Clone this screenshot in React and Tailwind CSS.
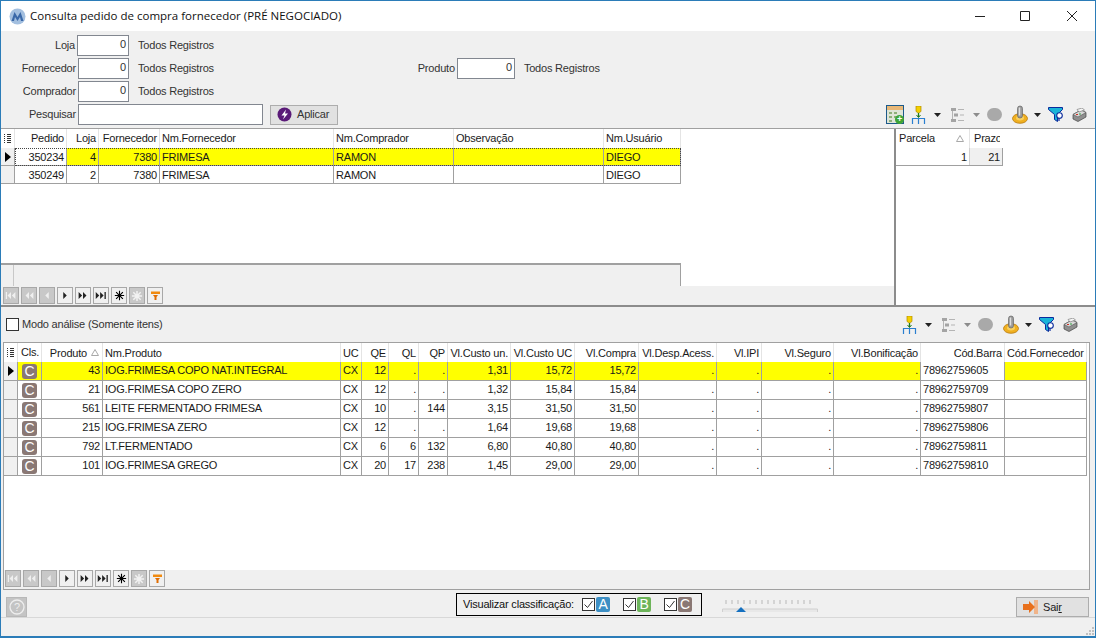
const topCols = [
  { t: "Pedido", w: 52, a: "text-right" },
  { t: "Loja", w: 32, a: "text-right" },
  { t: "Fornecedor", w: 61, a: "text-right" },
  { t: "Nm.Fornecedor", w: 174, a: "text-left" },
  { t: "Nm.Comprador", w: 120, a: "text-left" },
  { t: "Observação", w: 150, a: "text-left" },
  { t: "Nm.Usuário", w: 77, a: "text-left" },
];
const topRows = [
  ["350234", "4", "7380", "FRIMESA", "RAMON", "", "DIEGO"],
  ["350249", "2", "7380", "FRIMESA", "RAMON", "", "DIEGO"],
];
// a = alinhamento dos dados, h = alinhamento do titulo quando difere
const prodCols = [
  { t: "Produto", w: 61, a: "text-right", sort: true },
  { t: "Nm.Produto", w: 238, a: "text-left" },
  { t: "UC", w: 21, a: "text-left" },
  { t: "QE", w: 27, a: "text-right" },
  { t: "QL", w: 30, a: "text-right" },
  { t: "QP", w: 29, a: "text-right" },
  { t: "Vl.Custo un.", w: 63, a: "text-right" },
  { t: "Vl.Custo UC", w: 64, a: "text-right" },
  { t: "Vl.Compra", w: 64, a: "text-right" },
  { t: "Vl.Desp.Acess.", w: 78, a: "text-right" },
  { t: "Vl.IPI", w: 45, a: "text-right" },
  { t: "Vl.Seguro", w: 72, a: "text-right" },
  { t: "Vl.Bonificação", w: 87, a: "text-right" },
  { t: "Cód.Barra", w: 84, a: "text-left", h: "justify-end" },
  { t: "Cód.Fornecedor", w: 82, a: "text-left" },
];
const prodRows = [
  ["43", "IOG.FRIMESA COPO NAT.INTEGRAL", "CX", "12", ".", ".", "1,31", "15,72", "15,72", ".", ".", ".", ".", "78962759605", ""],
  ["21", "IOG.FRIMESA COPO ZERO", "CX", "12", ".", ".", "1,32", "15,84", "15,84", ".", ".", ".", ".", "78962759709", ""],
  ["561", "LEITE FERMENTADO FRIMESA", "CX", "10", ".", "144", "3,15", "31,50", "31,50", ".", ".", ".", ".", "78962759807", ""],
  ["215", "IOG.FRIMESA ZERO", "CX", "12", ".", ".", "1,64", "19,68", "19,68", ".", ".", ".", ".", "78962759806", ""],
  ["792", "LT.FERMENTADO", "CX", "6", "6", "132", "6,80", "40,80", "40,80", ".", ".", ".", ".", "78962759811", ""],
  ["101", "IOG.FRIMESA GREGO", "CX", "20", "17", "238", "1,45", "29,00", "29,00", ".", ".", ".", ".", "78962759810", ""],
];

function ColumnsIcon() {
  return (
    <svg width="7" height="9" viewBox="0 0 7 9" className="shrink-0">
      <path d="M0 .5h1M3 .5h4M0 2.5h1M3 2.5h4M0 4.5h1M3 4.5h4M0 6.5h1M3 6.5h4M0 8.5h1M3 8.5h4" stroke="#333" />
    </svg>
  );
}

function SortTriangle() {
  return (
    <svg width="8" height="7" viewBox="0 0 8 7" className="shrink-0">
      <path d="M4 .5 7.5 6.5H.5Z" fill="none" stroke="#a8a8a8" />
    </svg>
  );
}

function RowArrow() {
  return (
    <svg width="6" height="10" viewBox="0 0 6 10">
      <path d="M0 0 6 5 0 10Z" fill="#000" />
    </svg>
  );
}

function Pager() {
  const glyphs = [
    { d: "M2 4h1.500v8H2ZM8 4v8L4 8ZM13 4v8L9 8Z", off: true },
    { d: "M8 4v8L4 8ZM13 4v8L9 8Z", off: true },
    { d: "M10 4v8L6 8Z", off: true },
    { d: "M6 4v8l4-4Z" },
    { d: "M3 4v8l4-4ZM8 4v8l4-4Z" },
    { d: "M2 4v8l4-4ZM7 4v8l4-4ZM12 4h1.500v8H12Z" },
  ];
  return (
    <div className="flex gap-[2px]">
      {glyphs.map((g, i) => (
        <div key={i} className={`w-[16px] h-[17px] border border-[#a8a8a8] flex items-center justify-center ${g.off ? "bg-[#c8c8c8]" : "bg-[#f0f0f0]"}`}>
          <svg width="15" height="15" viewBox="0 0 16 16">
            <path d={g.d} fill={g.off ? "#efefef" : "#222"} />
          </svg>
        </div>
      ))}
      <div className="w-[16px] h-[17px] border border-[#a8a8a8] bg-[#f0f0f0] flex items-center justify-center">
        <svg width="11" height="11" viewBox="0 0 13 13">
          <path d="M6.500 1v11M1 6.500h11M2.500 2.500l8 8M10.500 2.500l-8 8" stroke="#000" strokeWidth="1.300" />
        </svg>
      </div>
      <div className="w-[16px] h-[17px] border border-[#a8a8a8] bg-[#c8c8c8] flex items-center justify-center">
        <svg width="12" height="12" viewBox="0 0 13 13">
          <path d="M6.500 1v11M1 6.500h11M2.500 2.500l8 8M10.500 2.500l-8 8" stroke="#f2f2f2" strokeWidth="1.600" />
        </svg>
      </div>
      <div className="w-[16px] h-[17px] border border-[#a8a8a8] bg-[#f0f0f0] flex items-center justify-center">
        <svg width="11" height="11" viewBox="0 0 11 11">
          <path d="M1 1.500h9v2.500H1Z" fill="#f08a10" />
          <path d="M3 5h5L6.500 7v3h-2V7Z" fill="#e06c00" />
        </svg>
      </div>
    </div>
  );
}

function Caret({ muted, className }) {
  return (
    <svg width="7" height="4" viewBox="0 0 7 4" className={`shrink-0 ${className}`}>
      <path d="M0 0h7L3.500 4Z" fill={muted ? "#8c8c8c" : "#222"} />
    </svg>
  );
}

function ForkIcon({ className }) {
  return (
    <svg width="16" height="18" viewBox="0 0 16 18" className={`shrink-0 ${className}`}>
      <path d="M5 0h5v5.500L7.500 7 5 5.500Z" fill="#f4d000" stroke="#b08a00" strokeWidth=".7" />
      <path d="M7.500 7v4" stroke="#1e7a1e" strokeWidth="1.300" />
      <path d="M5.500 9 7.500 11.500 9.500 9" fill="none" stroke="#1e7a1e" />
      <path d="M1.500 18v-5.500h12V18M7.500 12.500V18" fill="none" stroke="#2a7fd0" strokeWidth="1.200" />
    </svg>
  );
}

function ListIcon({ className }) {
  return (
    <svg width="13" height="14" viewBox="0 0 13 14" className={`shrink-0 ${className}`}>
      <path d="M0 0h5v3H0ZM3 5.500h4v3H3ZM0 11h5v3H0Z" fill="#a4a4a4" />
      <path d="M7 1.500h6M9 7h4M7 12.500h6M1.500 3v8" stroke="#b4b4b4" />
    </svg>
  );
}

function BlobIcon({ className }) {
  return <div className={`w-[15px] h-[13px] shrink-0 rounded-full bg-[#a9a9a9] ${className}`} />;
}

function JoystickIcon({ className }) {
  return (
    <svg width="16" height="19" viewBox="0 0 16 19" className={`shrink-0 ${className}`}>
      <ellipse cx="8" cy="13.500" rx="7.500" ry="4.800" fill="#f0b020" stroke="#b87a10" strokeWidth=".8" />
      <ellipse cx="8" cy="13" rx="4" ry="2.400" fill="#f8d060" />
      <rect x="5.500" y="1" width="5" height="12" rx="2.500" fill="#9a9a9a" stroke="#666" strokeWidth=".7" />
      <rect x="6.800" y="2.500" width="1.400" height="8" fill="#dedede" />
    </svg>
  );
}

function FunnelIcon({ className }) {
  return (
    <svg width="16" height="15" viewBox="0 0 16 15" className={`shrink-0 ${className}`}>
      <path d="M.5.500h14v2L9.500 7.500v7l-3-2v-5L.5 2.500Z" fill="#19b4d8" stroke="#0a2a9c" />
      <circle cx="11.500" cy="8.500" r="2.800" fill="#fff" stroke="#0a2a9c" strokeWidth="1.100" />
      <path d="M11 11v3" stroke="#0a2a9c" strokeWidth="1.200" />
    </svg>
  );
}

function PrinterIcon({ className }) {
  return (
    <svg width="15" height="14" viewBox="0 0 15 14" className={`shrink-0 ${className}`}>
      <path d="M1 6.500 9 2l5 2.500v4.500L6 13.500 1 11Z" fill="#8f8f8f" stroke="#444" strokeWidth=".7" />
      <path d="M1 6.500 6 9l8-4.500L9 2Z" fill="#d8d8d8" stroke="#555" strokeWidth=".6" />
      <path d="M5 1.500 10 0l2.500 2L7 4Z" fill="#f4f4f4" stroke="#555" strokeWidth=".5" />
      <path d="M4 6.500h2" stroke="#d03020" />
      <path d="M7 6h2" stroke="#30a040" />
    </svg>
  );
}

function CalendarIcon() {
  return (
    <div className="relative w-[18px] h-[19px] shrink-0 border border-[#1c5a8a] bg-[#dfe5d8]">
      <div className="h-[4px] bg-[#e8b878]" />
      <svg width="16" height="14" viewBox="0 0 16 14">
        <path d="M2 2h3v2H2ZM7 2h3v2H7ZM2 6h3v2H2ZM7 6h3v2H7ZM2 10h3v2H2Z" fill="#8eb07a" />
      </svg>
      <div className="absolute right-[-1px] bottom-[-1px] w-[9px] h-[9px] rounded-full bg-[#3fa535] text-white text-[9px] leading-[8px] text-center font-bold">+</div>
    </div>
  );
}

function Toolbar({ withCalendar }) {
  return (
    <div className="flex items-center">
      {withCalendar && <CalendarIcon />}
      <ForkIcon className={withCalendar ? "ml-[7px]" : ""} />
      <Caret className="ml-[7px]" />
      <ListIcon className="ml-[10px]" />
      <Caret muted className="ml-[9px]" />
      <BlobIcon className="ml-[7px]" />
      <JoystickIcon className="ml-[10px]" />
      <Caret className="ml-[6px]" />
      <FunnelIcon className="ml-[7px]" />
      <PrinterIcon className="ml-[8px]" />
    </div>
  );
}

function FilterRow({ label, labelW, inputW, value, hint }) {
  return (
    <div className="flex items-center h-[21px]">
      <span className="text-right pr-[2px]" style={{ width: labelW }}>{label}</span>
      <div className="h-[21px] border border-[#828790] bg-white text-right pr-[2px] leading-[17px]" style={{ width: inputW }}>{value}</div>
      {hint && <span className="ml-[9px] whitespace-nowrap">{hint}</span>}
    </div>
  );
}

function Check() {
  return (
    <div className="w-[13px] h-[13px] border border-[#333] bg-white flex items-center justify-center shrink-0">
      <svg width="11" height="11" viewBox="0 0 11 11">
        <path d="M1.500 5.500 4.500 8.500 9.500 2" fill="none" stroke="#333" />
      </svg>
    </div>
  );
}

function Badge({ color, letter }) {
  return <div className={`ml-[1px] w-[14px] h-[15px] rounded-[2px] text-white text-[14px] leading-[15px] text-center shrink-0 ${color}`}>{letter}</div>;
}

function App() {
  return (
    <div className="w-[1096px] h-[638px] flex flex-col overflow-hidden bg-[#f0f0f0] border border-[#2b7cb8] border-b-2 text-[11px] tracking-[-0.2px] text-[#1a1a1a] font-['Liberation_Sans',sans-serif]">
      {/* barra de titulo */}
      <div className="h-[30px] shrink-0 bg-white flex items-center pl-[8px]">
        <svg width="17" height="17" viewBox="0 0 17 17" className="shrink-0">
          <circle cx="8.500" cy="8.500" r="8" fill="#a3bfdf" />
          <path d="M2.500 13 5.500 4 8.500 9 11.500 4 14.500 13h-2.500L11 9 8.500 13 6 9 5 13Z" fill="#3a68a8" />
        </svg>
        <span className="ml-[4px] text-[11.5px] tracking-normal text-[#111] font-['Open_Sans',sans-serif]">Consulta pedido de compra fornecedor (PRÉ NEGOCIADO)</span>
        <div className="ml-auto flex items-center">
          <svg width="46" height="12" viewBox="0 0 46 12">
            <path d="M18 6.500h10" stroke="#222" />
          </svg>
          <svg width="46" height="12" viewBox="0 0 46 12">
            <path d="M17.500 1.500h9v9h-9Z" fill="none" stroke="#222" />
          </svg>
          <svg width="46" height="12" viewBox="0 0 46 12">
            <path d="M18 1l10 10M28 1 18 11" stroke="#222" />
          </svg>
        </div>
      </div>

      {/* filtros */}
      <div className="h-[97px] shrink-0 flex flex-col pt-[4px] gap-[2px] text-[#333]">
        <FilterRow label="Loja" labelW={76} inputW={52} value="0" hint="Todos Registros" />
        <div className="flex items-center">
          <FilterRow label="Fornecedor" labelW={77} inputW={51} value="0" hint="Todos Registros" />
          <div className="ml-[188px]">
            <FilterRow label="Produto" labelW={55} inputW={58} value="0" hint="Todos Registros" />
          </div>
        </div>
        <FilterRow label="Comprador" labelW={77} inputW={51} value="0" hint="Todos Registros" />
        <div className="flex items-center">
          <FilterRow label="Pesquisar" labelW={77} inputW={185} value="" />
          <button className="ml-[7px] w-[68px] h-[20px] border border-[#adadad] bg-[#e1e1e1] flex items-center pl-[6px]">
            <svg width="15" height="15" viewBox="0 0 15 15">
              <circle cx="7.500" cy="7.500" r="7" fill="#5a1a78" />
              <path d="M9 2.500 4.500 8.500h3L6 12.500 11 6.500H8Z" fill="#fff" />
            </svg>
            <span className="ml-[5px]">Aplicar</span>
          </button>
          <div className="ml-auto mr-[8px]">
            <Toolbar withCalendar />
          </div>
        </div>
      </div>

      {/* grades de pedidos e parcelas */}
      <div className="h-[177px] shrink-0 flex border-t border-[#a0a0a0] bg-white">
        <div className="w-[893px] shrink-0 flex flex-col">
          <div className="flex-1 flex flex-col">
            <div className="flex h-[19px]">
              <div className="w-[14px] border-r border-[#e4e4e4] flex items-center justify-center">
                <ColumnsIcon />
              </div>
              {topCols.map((c) => (
                <div key={c.t} className={`px-[2px] leading-[18px] border-r border-[#e4e4e4] whitespace-nowrap ${c.a}`} style={{ width: c.w }}>{c.t}</div>
              ))}
            </div>
            {topRows.map((r, i) => (
              <div key={i} className="flex h-[18px]">
                <div className="w-[14px] bg-[#f0f0f0] border-r border-b border-[#a0a0a0] flex items-center justify-center">
                  {i === 0 && <RowArrow />}
                </div>
                <div className={`flex ${i === 0 ? "outline outline-dotted outline-[#444] -outline-offset-1" : ""}`}>
                  {r.map((v, j) => (
                    <div
                      key={j}
                      className={`px-[2px] leading-[18px] border-r border-b border-[#a0a0a0] whitespace-nowrap overflow-hidden ${topCols[j].a} ${i === 0 && j > 0 ? "bg-[#ffff00]" : ""}`}
                      style={{ width: topCols[j].w }}
                    >
                      {v}
                    </div>
                  ))}
                </div>
              </div>
            ))}
          </div>
          <div className="h-[23px] w-[680px] flex border-t-2 border-[#a0a0a0] border-r bg-[#f0f0f0]">
            <div className="w-[13px] border-r border-[#c8c8c8]" />
          </div>
          <div className="h-[19px] bg-[#f0f0f0] pl-[2px] pt-[1px]">
            <Pager />
          </div>
        </div>
        <div className="flex-1 border-l-2 border-[#8c8c8c]">
          <div className="flex h-[19px]">
            <div className="w-[74px] flex items-center justify-between pl-[3px] pr-[5px] border-r border-[#e4e4e4]">
              <span>Parcela</span>
              <SortTriangle />
            </div>
            <div className="w-[30px] pl-[4px] leading-[18px] overflow-hidden whitespace-nowrap">Prazo</div>
          </div>
          <div className="flex h-[18px] w-[107px] border-b border-[#a0a0a0]">
            <div className="w-[74px] text-right pr-[2px] leading-[18px] border-r border-[#d0d0d0]">1</div>
            <div className="w-[33px] text-right pr-[2px] leading-[18px] bg-[#f0f0f0] border-r border-[#a0a0a0]">21</div>
          </div>
        </div>
      </div>

      {/* itens */}
      <div className="border-t-2 border-[#8c8c8c] h-[37px] shrink-0 flex items-center pl-[5px] pr-[17px]">
        <div className="w-[13px] h-[13px] border border-[#333] bg-white" />
        <span className="ml-[3px] text-[#333]">Modo análise (Somente itens)</span>
        <div className="ml-auto">
          <Toolbar />
        </div>
      </div>

      <div className="ml-[2px] w-[1087px] h-[248px] shrink-0 border border-[#a0a0a0] bg-white flex flex-col">
        <div className="flex-1">
          <div className="flex h-[19px]">
            <div className="w-[14px] border-r border-[#e4e4e4] flex items-center justify-center">
              <ColumnsIcon />
            </div>
            <div className="w-[24px] pl-[3px] leading-[18px] border-r border-[#e4e4e4]">Cls.</div>
            {prodCols.map((c) => (
              <div key={c.t} className={`px-[2px] leading-[18px] border-r border-[#e4e4e4] whitespace-nowrap overflow-hidden flex items-center ${c.h || (c.a === "text-right" ? "justify-end" : "")}`} style={{ width: c.w }}>
                <span>{c.t}</span>
                {c.sort && <span className="ml-[4px] mr-[1px]"><SortTriangle /></span>}
              </div>
            ))}
          </div>
          {prodRows.map((r, i) => (
            <div key={i} className="flex h-[19px]">
              <div className="w-[14px] bg-[#f0f0f0] border-r border-b border-[#a0a0a0] flex items-center justify-center">
                {i === 0 && <RowArrow />}
              </div>
              <div className={`w-[24px] border-r border-b border-[#a0a0a0] flex items-center justify-center ${i === 0 ? "bg-[#ffff00]" : ""}`}>
                <div className="w-[15px] h-[15px] rounded-[3px] bg-[#8a7874] text-white text-[14px] tracking-normal leading-[15px] text-center">C</div>
              </div>
              {r.map((v, j) => (
                <div
                  key={j}
                  className={`px-[2px] leading-[17px] border-r border-b border-[#a0a0a0] whitespace-nowrap overflow-hidden ${prodCols[j].a} ${i === 0 && j !== 13 ? "bg-[#ffff00]" : ""}`}
                  style={{ width: prodCols[j].w }}
                >
                  {v}
                </div>
              ))}
            </div>
          ))}
        </div>
        <div className="h-[19px] shrink-0 bg-[#f0f0f0] pl-[1px]">
          <Pager />
        </div>
      </div>

      {/* rodape */}
      <div className="flex-1 flex flex-col">
        <div className="h-[28px] shrink-0 flex items-start border-b border-[#d8d8d8]">
          <div className="ml-[5px] mt-[7px] w-[21px] h-[20px] bg-[#c4c4c4] border border-[#b8b8b8] flex items-center justify-center">
            <svg width="16" height="16" viewBox="0 0 16 16">
              <circle cx="8" cy="8" r="7" fill="none" stroke="#eee" strokeWidth="1.300" />
              <text x="8" y="12" textAnchor="middle" fontSize="11" fill="#eee" fontFamily="Liberation Sans">?</text>
            </svg>
          </div>
          <div className="ml-[429px] mt-[3px] w-[246px] h-[23px] border border-black flex items-center pl-[6px]">
            <span className="w-[119px] whitespace-nowrap text-[#111]">Visualizar classificação:</span>
            <Check />
            <Badge color="bg-[#3d8fc4]" letter="A" />
            <div className="ml-[13px]"><Check /></div>
            <Badge color="bg-[#6db45a]" letter="B" />
            <div className="ml-[13px]"><Check /></div>
            <Badge color="bg-[#8a7874]" letter="C" />
          </div>
          <svg width="96" height="16" viewBox="0 0 96 16" className="ml-[20px] mt-[7px]">
            <path d="M4 3v4M10 3v4M16 3v4M22 3v4M28 3v4M34 3v4M40 3v4M46 3v4M52 3v4M58 3v4M64 3v4M70 3v4M76 3v4M82 3v4M88 3v4" stroke="#b8b8b8" />
            <path d="M.5 15v-3h95v3" fill="#e8e8e8" stroke="#d0d0d0" />
            <path d="M14 15l5-5 5 5Z" fill="#1470c0" />
          </svg>
          <button className="ml-[198px] mt-[7px] w-[73px] h-[20px] border border-[#adadad] bg-[#e1e1e1] flex items-center pl-[6px]">
            <svg width="16" height="14" viewBox="0 0 16 14">
              <path d="M11 0h4v14h-4Z" fill="#f0b48a" />
              <path d="M0 4h6V1l6 6-6 6v-3H0Z" fill="#e8701c" />
            </svg>
            <span className="ml-[4px] text-[#222]">Sai<span className="underline">r</span></span>
          </button>
        </div>
        <div className="flex-1 flex items-end justify-end pr-[1px] pb-[1px]">
          <svg width="9" height="9" viewBox="0 0 9 9">
            <path d="M7 1h2v2H7ZM4 4h2v2H4ZM7 4h2v2H7ZM1 7h2v2H1ZM4 7h2v2H4ZM7 7h2v2H7Z" fill="#c0c0c0" />
          </svg>
        </div>
      </div>
    </div>
  );
}

export default App;
